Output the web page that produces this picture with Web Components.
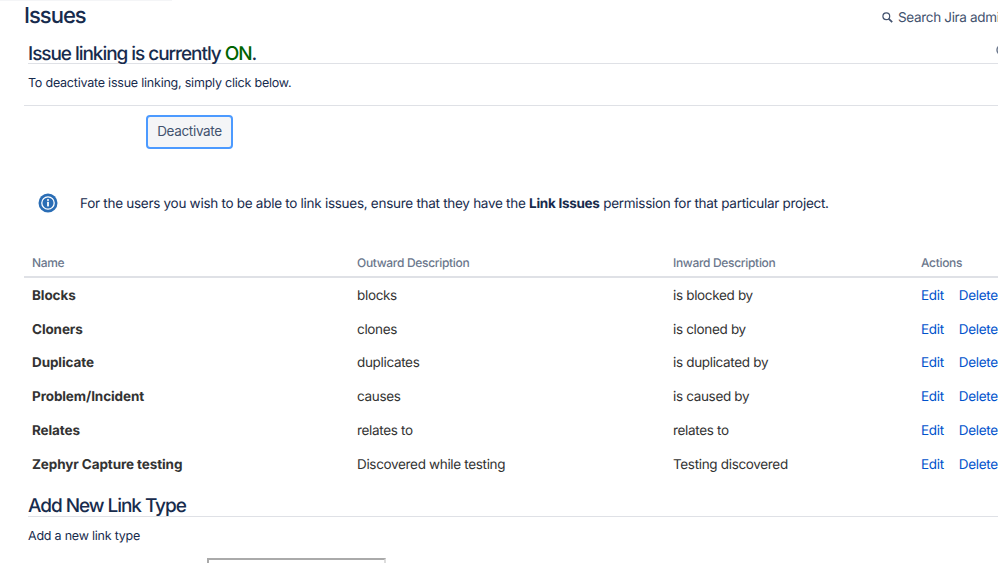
<!DOCTYPE html>
<html>
<head>
<meta charset="utf-8">
<title>Issues</title>
<style>
  html, body { margin: 0; height: 563px; overflow: hidden; background: #fff; }
  body { font-family: Inter, Roboto, "Liberation Sans", sans-serif; font-size: 13.5px; letter-spacing: -0.33px; color: #172b4d; text-rendering: geometricPrecision; }
</style>
</head>
<body>
<admin-page>
  <page-header title="Issues"></page-header>
  <section-title help>Issue linking is currently <span style="color:#006400">ON</span>.</section-title>
  <plain-note>To deactivate issue linking, simply click below.</plain-note>
  <action-bar label="Deactivate"></action-bar>
  <info-note>For the users you wish to be able to link issues, ensure that they have the <b>Link Issues</b> permission for that particular project.</info-note>
  <link-table></link-table>
  <section-title class="second">Add New Link Type</section-title>
  <plain-note class="second">Add a new link type</plain-note>
  <add-form></add-form>
</admin-page>

<script>
// Small helper so every element gets an open shadow root with its own styles
class ShadowBase extends HTMLElement {
    constructor() {
        super();
        this.attachShadow({ mode: 'open' });
    }
}

class AdminPage extends ShadowBase {
    connectedCallback() {
        this.shadowRoot.innerHTML = `
            <style>
                :host { display: block; width: 1100px; height: 563px; overflow: hidden; }
                .top { height: 1px; width: 172px; background: #f4f5f7; }
                .wrap { display: flex; flex-direction: column; }
            </style>
            <div class="top"></div>
            <div class="wrap"><slot></slot></div>
        `;
    }
}

class PageHeader extends ShadowBase {
    connectedCallback() {
        this.shadowRoot.innerHTML = `
            <style>
                :host { display: block; width: 998px; overflow: hidden; }
                .bar { display: flex; justify-content: space-between; align-items: center; height: 30px; padding-left: 24px; }
                h1 { margin: 0; font-size: 22px; font-weight: 500; line-height: 28px; letter-spacing: -1px; color: #172b4d; }
                .search { display: flex; align-items: center; gap: 5px; width: 116px; flex: none; white-space: nowrap; overflow: hidden; color: #42526e; padding-top: 4px; }
                svg { flex: none; margin-bottom: 2px; }
            </style>
            <div class="bar">
                <h1>${this.getAttribute('title')}</h1>
                <div class="search">
                    <svg width="11" height="11" viewBox="0 0 11 11" fill="none" stroke="#42526e" stroke-width="1.2">
                        <circle cx="4.3" cy="4.3" r="3.4"/>
                        <path d="M6.8 6.8 L10.2 10.2" stroke-width="1.7"/>
                    </svg>
                    <span>Search Jira admin</span>
                </div>
            </div>
        `;
    }
}

class SectionTitle extends ShadowBase {
    connectedCallback() {
        const help = this.hasAttribute('help')
            ? `<svg class="help" width="12" height="12" viewBox="0 0 12 12"><circle cx="6" cy="6" r="5" fill="none" stroke="#6b778c" stroke-width="1.5"/></svg>`
            : '';
        this.shadowRoot.innerHTML = `
            <style>
                :host { display: block; margin: 10px 0 0 28px; width: 970px; border-bottom: 1px solid #dfe1e6; position: relative; }
                :host(.second) { margin-top: 13px; }
                h2 { margin: 0; padding-top: 4px; font-size: 19px; font-weight: 500; line-height: 18px; letter-spacing: -1.05px; color: #172b4d; }
                :host(.second) h2 { padding-top: 2px; line-height: 20px; }
                .help { position: absolute; left: 968px; top: 3px; }
            </style>
            <h2><slot></slot></h2>
            ${help}
        `;
    }
}

class PlainNote extends ShadowBase {
    connectedCallback() {
        this.shadowRoot.innerHTML = `
            <style>
                :host { display: block; margin-left: 28px; padding: 12px 0 13px; line-height: 16px; font-size: 12.5px; letter-spacing: -0.22px; }
            </style>
            <slot></slot>
        `;
    }
}

class ActionBar extends ShadowBase {
    connectedCallback() {
        this.shadowRoot.innerHTML = `
            <style>
                :host { display: block; margin-left: 24px; width: 974px; border-top: 1px solid #dfe1e6; padding: 9px 0 0 122px; box-sizing: border-box; }
                button { display: block; width: 87px; height: 34px; box-sizing: border-box; padding: 0 0 2px; font: inherit; letter-spacing: inherit; color: #42526e; background: #f4f5f7; border: 2px solid #4c9aff; border-radius: 4px; }
            </style>
            <button>${this.getAttribute('label')}</button>
        `;
    }
}

class InfoNote extends ShadowBase {
    connectedCallback() {
        this.shadowRoot.innerHTML = `
            <style>
                :host { display: flex; align-items: center; margin: 44px 0 0 38px; letter-spacing: -0.28px; }
                svg { flex: none; margin: 0 22px 2px 0; }
                div { line-height: 20px; white-space: nowrap; }
            </style>
            <svg width="20" height="20" viewBox="0 0 20 20">
                <circle cx="10" cy="10" r="9.5" fill="#2a6db5"/>
                <circle cx="10" cy="10" r="6.2" fill="none" stroke="#fff" stroke-width="1.3"/>
                <circle cx="10" cy="7" r="1" fill="#fff"/>
                <rect x="9.1" y="8.8" width="1.8" height="4.6" fill="#fff"/>
            </svg>
            <div><slot></slot></div>
        `;
    }
}

const LINK_TYPES = [
    ['Blocks', 'blocks', 'is blocked by'],
    ['Cloners', 'clones', 'is cloned by'],
    ['Duplicate', 'duplicates', 'is duplicated by'],
    ['Problem/Incident', 'causes', 'is caused by'],
    ['Relates', 'relates to', 'relates to'],
    ['Zephyr Capture testing', 'Discovered while testing', 'Testing discovered']
];

class LinkTable extends ShadowBase {
    connectedCallback() {
        const rows = LINK_TYPES.map(([name, outward, inward]) => `
            <div class="row">
                <b>${name}</b>
                <span>${outward}</span>
                <span>${inward}</span>
                <span class="actions"><a>Edit</a><a>Delete</a></span>
            </div>
        `).join('');
        this.shadowRoot.innerHTML = `
            <style>
                :host { display: block; margin: 35px 0 0 24px; width: 1040px; }
                .row, .head { display: grid; grid-template-columns: 325px 316px 248px 1fr; padding-left: 8px; align-items: center; }
                .head { border-bottom: 2px solid #dfe1e6; font-size: 12px; font-weight: 500; letter-spacing: -0.32px; color: #6b778c; height: 25px; padding-bottom: 1px; }
                .row { height: 33.8px; box-sizing: border-box; padding-top: 2px; color: #333; }
                .row b { font-weight: 700; letter-spacing: -0.1px; }
                .actions { display: flex; gap: 15px; }
                a { color: #0052cc; }
            </style>
            <div class="head">
                <span>Name</span><span>Outward Description</span><span>Inward Description</span><span>Actions</span>
            </div>
            ${rows}
        `;
    }
}

class AddForm extends ShadowBase {
    connectedCallback() {
        this.shadowRoot.innerHTML = `
            <style>
                :host { display: flex; margin-left: 24px; gap: 12px; }
                label { width: 171px; text-align: right; line-height: 16px; padding-top: 3px; }
                input { width: 179px; height: 30px; box-sizing: border-box; border: 2px solid #aaa; border-bottom-color: #ddd; border-right-color: #ddd; margin: 0; padding: 0; }
            </style>
            <label>Name</label>
            <input type="text">
        `;
    }
}

customElements.define('admin-page', AdminPage);
customElements.define('page-header', PageHeader);
customElements.define('section-title', SectionTitle);
customElements.define('plain-note', PlainNote);
customElements.define('action-bar', ActionBar);
customElements.define('info-note', InfoNote);
customElements.define('link-table', LinkTable);
customElements.define('add-form', AddForm);
</script>
</body>
</html>
